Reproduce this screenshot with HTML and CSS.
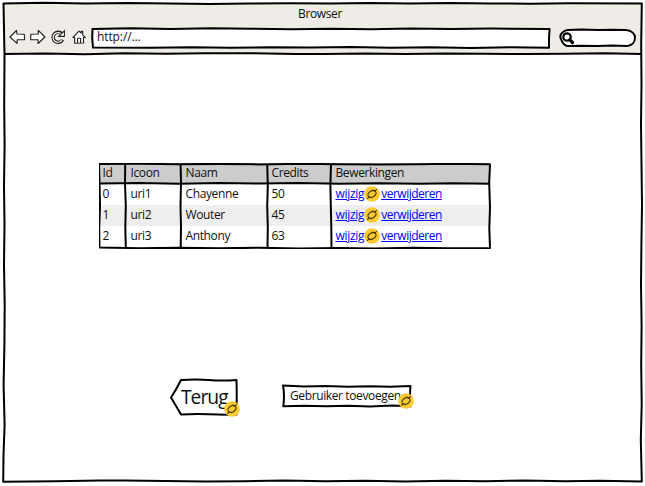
FILE: index.html
```html
<!DOCTYPE html>
<html lang="nl">
<head>
<meta charset="utf-8">
<title>Browser</title>
<link rel="stylesheet" href="styles.css">
</head>
<body>
<svg class="symbols" aria-hidden="true">
  <symbol id="link-badge" viewBox="0 0 16 16">
    <circle cx="8" cy="8" r="7.8" fill="#fccb32"/>
    <ellipse cx="8" cy="8" rx="4.3" ry="3" transform="rotate(-35 8 8)" fill="none" stroke="#4a3a12" stroke-width="1.1"/>
    <path d="M10.4 5.6L12.8 3.2M5.6 10.4L3.2 12.8M8.2 4L9.6 5.2M6.4 10.8L7.8 12" stroke="#4a3a12" stroke-width="1.1"/>
  </symbol>
</svg>
<div class="window">
  <header class="chrome">
    <div class="title">Browser</div>
    <div class="toolbar">
      <svg class="nav" viewBox="0 0 82 20">
        <g fill="#fff" stroke="#222" stroke-width="1.15" stroke-linejoin="round">
          <path d="M1 10L7.5 3.5L8 7L15.3 7.2L15.6 12.6L8.2 12.8L8 16.4Z"/>
          <path d="M35.9 10L29.3 3.4L29.3 7L21.8 7.3L21.7 12.7L29.1 12.8L29.1 16.5Z"/>
          <path d="M63.9 10.4L70 4.1L72.2 6.2L72.2 4.3L73.7 4.3L73.7 7.8L76.2 10.4L74.4 10.6L74.6 16L65.7 16.2L65.7 10.5Z"/>
          <path d="M68.6 16V11.6Q70 10.4 71.6 11.6V16" fill="none"/>
        </g>
        <path d="M53.2 7.4A5 5 0 1 0 53.6 12.4" fill="none" stroke="#222" stroke-width="3.4"/>
        <path d="M52.9 7.8A4.8 4.8 0 1 0 53.3 12.3" fill="none" stroke="#fff" stroke-width="1.2"/>
        <path d="M55.4 3.8V9.4H49.6Z" fill="#fff" stroke="#222" stroke-width="1.1"/>
      </svg>
      <div class="address">
        <svg class="sketch" viewBox="0 0 460 22"><path d="M1.5 2L40 1.3L80 2L120 1.2L160 1.8L200 2.3L240 1.7L280 2.2L320 1.4L360 2L400 1.6L458.6 2L458 11L458 20.8L420 20.2L380 21L340 20.3L300 20.8L260 20L220 20.6L180 20.2L140 20.8L100 20.2L60 20.7L2 20.6L1.2 11Z"/></svg>
        <span>http://...</span>
      </div>
      <div class="search">
        <svg class="sketch" viewBox="0 0 79 20"><path d="M10 2L24 1.6L40 2L54 1.7L68 2C74 2.5 77 6 77 9.5C77 14 74 17.5 69 17.9L54 17.6L40 18L24 17.7L9 18Q5 17 3 11Q1 7 5 4Q7 2.3 10 2Z"/><circle cx="9" cy="9" r="3.7"/><path class="handle" d="M11.8 11.8L14.5 14.5"/></svg>
      </div>
    </div>
  </header>
  <main class="page">
    <div class="table">
      <div class="row head"><span>Id</span><span>Icoon</span><span>Naam</span><span>Credits</span><span>Bewerkingen</span></div>
      <div class="row"><span>0</span><span>uri1</span><span>Chayenne</span><span>50</span><span class="actions"><a href="#">wijzig</a><svg class="badge"><use href="#link-badge"/></svg><a class="delete" href="#">verwijderen</a></span></div>
      <div class="row alt"><span>1</span><span>uri2</span><span>Wouter</span><span>45</span><span class="actions"><a href="#">wijzig</a><svg class="badge"><use href="#link-badge"/></svg><a class="delete" href="#">verwijderen</a></span></div>
      <div class="row"><span>2</span><span>uri3</span><span>Anthony</span><span>63</span><span class="actions"><a href="#">wijzig</a><svg class="badge"><use href="#link-badge"/></svg><a class="delete" href="#">verwijderen</a></span></div>
      <svg class="sketch" viewBox="0 0 392 86">
        <path d="M0 1L40 .8L80 1.2L120 .9L160 1.4L200 .8L240 1.2L280 1.6L320 1.3L350 .8L391 1.2L390.2 20L391 45L390.3 65L391 85L350 85.3L315 84.8L275 85.4L240 85L200 85.4L160 84.8L120 85.3L80 84.8L40 85.2L.5 84.4L.2 65L1 43L.5 20Z"/>
        <path d="M1 20.6L40 20L80 20.8L120 20.1L160 20.5L200 20L240 20.8L280 20.2L320 20.8L355 20.3L391 20.8"/>
        <path d="M26.2 1L26 20L26.8 43L26.3 64L26.8 85M81.6 1L82 20L81.5 43L82 64L81.7 85M168.2 1L168.8 23L168.2 43L168.8 64L168.5 85M232 1L231.4 22L231.8 43L232.3 64L232.5 85"/>
      </svg>
    </div>
    <div class="buttons">
      <button class="back">
        <svg class="sketch" viewBox="0 0 68 38"><path d="M11 2Q26 .8 39 2T66.5 2Q67 18 66.4 36.6Q53 37 39 36.3T11 36.6Q6 28 1 19.6Q6 12 11 2Z"/></svg>
        <span>Terug</span><svg class="badge"><use href="#link-badge"/></svg>
      </button>
      <button class="add">
        <svg class="sketch" viewBox="0 0 130 24"><path d="M1 1.5L22 2.5L44 2L66 2.8L88 2.2L108 2.7L128.5 2Q127.5 12 128.6 22.3L110 21.6L88 22.4L66 21.8L44 22.3L22 21.7L1.3 22.3Q2.8 11 1 1.5Z"/></svg>
        <span>Gebruiker toevoegen</span><svg class="badge"><use href="#link-badge"/></svg>
      </button>
    </div>
  </main>
  <svg class="sketch" viewBox="0 0 645 486">
    <path d="M3.5 3.4L45 2.8L85 3.5L128 3L170 3.5L210 4L250 3.5L290 3.2L330 3.6L370 3.1L410 3.5L450 3L490 3.4L530 3.8L570 3.3L641.8 3.5L641.2 45L641.5 85L641 125L641.5 165L642 205L641.4 245L641 285L641.6 325L641.2 365L641.7 405L640.8 440L641.8 481.4L600 480.7L565 481.2L525 480.6L485 481.2L445 480.8L405 481.4L365 480.7L325 481.2L285 480.6L245 481.2L205 481.5L165 480.9L125 480.6L100 480.6L55 481.3L3.2 481.7L3.5 455L4.6 425L3.6 385L4.4 345L4.7 305L4 265L4.5 225L4 185L4.6 145L4.2 105L4.5 55Z"/>
    <path d="M4 54.1L45 53.4L85 54.2L125 53.3L165 53.8L205 53.2L250 53.2L295 53.9L325 54.1L365 53.4L405 54L445 53.4L485 53.8L525 54.1L565 53.7L605 53.3L641 54"/>
  </svg>
</div>
</body>
</html>
```
FILE: styles.css
```css
* { box-sizing: border-box; }
body {
  margin: 0;
  background: #fff;
  color: #111;
  font: 12px/20px "Open Sans", "Noto Sans", sans-serif;
  letter-spacing: -0.38px;
}
.symbols { position: absolute; width: 0; height: 0; }
.window {
  position: relative;
  width: 645px;
  height: 486px;
  padding: 3px 4px 4px;
  overflow: hidden;
}
.sketch {
  position: absolute;
  inset: 0;
  width: 100%;
  height: 100%;
  fill: none;
  stroke: #000;
  stroke-width: 2;
  stroke-linejoin: round;
  pointer-events: none;
}
.chrome { height: 51px; background: #efebe7; }
.title { height: 24px; padding: 1px 5px 0 0; text-align: center; }
.toolbar { display: flex; align-items: flex-start; padding-left: 5px; }
.nav { width: 82px; height: 20px; flex: none; }
.address {
  position: relative;
  width: 460px;
  height: 22px;
  padding-left: 6px;
}
.address span, .back span, .add span { position: relative; }
.address .sketch, .search .sketch, .back .sketch, .add .sketch { fill: #fff; }
.address span { letter-spacing: -0.1px; }
.search { position: relative; width: 79px; height: 20px; margin: 1px 0 0 7px; }
.search .sketch circle { stroke-width: 2.2; }
.search .handle { stroke-width: 3.2; stroke-linecap: round; }
.page { padding: 109px 0 0 95px; }
.table { position: relative; width: 392px; height: 86px; }
.row {
  display: grid;
  grid-template-columns: 28px 55px 86px 64px 1fr;
  width: 391px;
  height: 21px;
  padding-left: 3.5px;
  line-height: 20px;
}
.head { background: #ccc; }
.alt { background: #eee; }
.actions { display: flex; align-items: center; height: 20px; }
.actions a { color: #00f; text-decoration: underline; letter-spacing: -0.3px; }
.actions .delete { margin-left: 1px; letter-spacing: -0.5px; }
.badge { width: 16px; height: 16px; flex: none; }
.buttons { display: flex; align-items: flex-start; padding: 129px 0 0 71px; }
button {
  position: relative;
  padding: 0;
  border: 0;
  background: none;
  color: inherit;
  font: inherit;
  letter-spacing: inherit;
  text-align: left;
}
.back { width: 68px; height: 38px; padding-left: 11px; font-size: 19.3px; line-height: 38px; letter-spacing: -1px; }
.add { width: 130px; height: 24px; margin: 6px 0 0 44px; padding-left: 8px; line-height: 22px; }
button .badge { position: absolute; right: -2px; bottom: -1px; }
```
